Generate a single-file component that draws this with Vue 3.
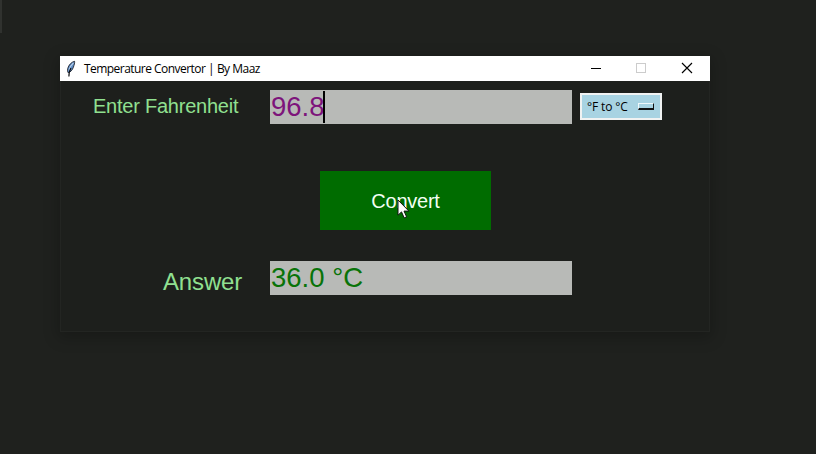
<script setup>
import { ref } from 'vue'

const value = ref('96.8')
const answer = ref('36.0 °C')
const mode = ref('°F to °C')
</script>

<template>
  <main class="desktop">
    <i class="edge"></i>
    <section class="window">
      <header class="titlebar">
        <svg class="feather" width="14" height="18" viewBox="0 0 14 18">
          <path d="M10.600 1.300C7.500 2 4.600 5 3.700 8.600c-.3 1.600-.2 3 .4 4.100 2.300-.4 4.300-2.600 5.300-5.500.8-2.400 1.400-4.200 1.200-5.900z" fill="#5d8cc6" stroke="#20242c" stroke-width="0.900" />
          <path d="M9.400 3C7 5 5.600 7.500 5 10.500" stroke="#b5cfea" stroke-width="1.100" fill="none" />
          <path d="M7 8C5.600 10 5 12 4.900 16.500" stroke="#0b0c10" stroke-width="1.200" fill="none" />
        </svg>
        <span class="title">Temperature Convertor | By Maaz</span>
        <nav class="controls">
          <svg viewBox="0 0 46 25"><path d="M11 12.500h10" stroke="#000" /></svg>
          <svg viewBox="0 0 46 25"><rect x="10.500" y="7.500" width="9" height="9" fill="none" stroke="#ccc" /></svg>
          <svg viewBox="0 0 38 25"><path d="M10 7l10 10M20 7l-10 10" stroke="#000" stroke-width="1.150" /></svg>
        </nav>
      </header>
      <div class="body">
        <div class="row input-row">
          <label class="prompt">Enter Fahrenheit</label>
          <div class="field value"><span>{{ value }}</span><i class="caret"></i></div>
          <div class="option">
            <span>{{ mode }}</span>
            <i class="indicator"></i>
          </div>
        </div>
        <div class="button">
          <span>Convert</span>
          <svg class="cursor" width="13" height="20" viewBox="0 0 13 20">
            <path d="M1 1v15.200l3.500-3.300 2.700 6 2.400-1.100-2.600-5.700h4.900z" fill="#fff" stroke="#101510" stroke-width="1" />
          </svg>
        </div>
        <div class="row answer-row">
          <label class="answer-label">Answer</label>
          <div class="field result"><span>{{ answer }}</span></div>
        </div>
      </div>
    </section>
  </main>
</template>

<style>
body {
  background: #1f211e;
}
</style>

<style scoped>
.desktop {
  position: relative;
  box-sizing: border-box;
  height: 454px;
  padding: 56px 0 0 60px;
  overflow: hidden;
  background: #1f211e;
  font-family: "Liberation Sans", Arial, sans-serif;
}
.edge {
  position: absolute;
  left: 0;
  top: 0;
  width: 2px;
  height: 33px;
  background: #30322f;
}
.window {
  width: 650px;
  height: 276px;
  background: #1d1f1c;
  box-shadow: 0 4px 14px 2px rgba(0, 0, 0, 0.22);
}
.titlebar {
  display: flex;
  align-items: center;
  height: 25px;
  background: #fff;
}
.feather {
  flex: none;
  margin-left: 4px;
}
.title {
  margin-left: 6px;
  color: #000;
  font: 12px/24px "Open Sans", "Noto Sans", sans-serif;
  letter-spacing: -0.550px;
  word-spacing: 0.200px;
  white-space: nowrap;
}
.controls {
  display: flex;
  margin-left: auto;
}
.controls svg {
  width: 46px;
  height: 25px;
}
.controls svg:last-child {
  width: 38px;
}
.body {
  box-sizing: border-box;
  height: 251px;
  padding-top: 9px;
  border: solid #232522;
  border-width: 0 1px 1px;
}
.row {
  display: flex;
}
.prompt,
.answer-label {
  box-sizing: border-box;
  width: 209px;
  color: #90e090;
  white-space: nowrap;
}
.prompt {
  padding-left: 32px;
  font-size: 20px;
  line-height: 32px;
  letter-spacing: -0.230px;
}
.answer-label {
  padding-left: 102px;
  font-size: 24px;
  line-height: 42px;
  letter-spacing: -0.150px;
}
.field {
  box-sizing: border-box;
  display: flex;
  width: 302px;
  height: 34px;
  padding-left: 1px;
  background: #b8bab7;
  font-size: 27.500px;
  line-height: 34px;
  white-space: pre;
}
.value {
  color: #7d147b;
}
.value span {
  width: 52px;
}
.result {
  color: #087308;
}
.caret {
  width: 2px;
  height: 32px;
  margin-top: 1px;
  background: #000;
}
.option {
  box-sizing: border-box;
  display: flex;
  align-items: center;
  justify-content: space-between;
  width: 82px;
  height: 27px;
  margin: 3px 0 0 8px;
  padding: 0 6px 0 5px;
  border: 2px solid #f0f2f2;
  background: #a8d3e2;
  color: #000;
  font: 12px/22px "Open Sans", "Noto Sans", sans-serif;
  letter-spacing: -0.120px;
}
.indicator {
  box-sizing: border-box;
  width: 16px;
  height: 7px;
  margin-top: -1px;
  border: solid;
  border-width: 1px 1px 2px 1px;
  border-color: #eef8fb #111 #111 #eef8fb;
}
.button {
  position: relative;
  display: flex;
  align-items: center;
  justify-content: center;
  width: 171px;
  height: 59px;
  margin: 47px 0 31px 259px;
  background: #006c00;
  color: #f3fff3;
  font-size: 20px;
  letter-spacing: -0.250px;
}
.button span {
  padding-top: 1px;
}
.cursor {
  position: absolute;
  left: 77px;
  top: 28px;
}
</style>
